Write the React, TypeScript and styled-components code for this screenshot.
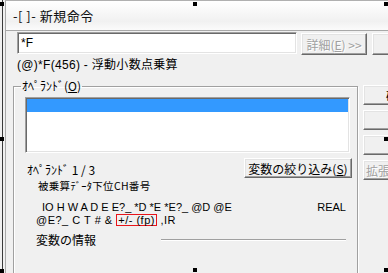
import React from 'react'
import styled, { createGlobalStyle } from 'styled-components'

const GlobalStyle = createGlobalStyle`
  html, body {
    margin: 0;
    padding: 0;
    background: #f0f0f0;
    overflow: hidden;
  }
  body {
    font-family: "Liberation Sans", "Noto Sans CJK JP", sans-serif;
    font-size: 12px;
    color: #000;
  }
`

const Stage = styled.div`
  position: relative;
  width: 388px;
  height: 273px;
  overflow: hidden;
  padding-left: 5px;
  box-sizing: border-box;
`

const Window = styled.div`
  width: 440px;
  height: 300px;
  border-left: 1px solid #a9a9a9;
  border-top: 1px solid #b0b0b0;
  background: #f0f0f0;
  display: flex;
  flex-direction: column;
`

const TitleBar = styled.div`
  height: 29px;
  flex-shrink: 0;
  border-bottom: 1px solid #a8a8a8;
  background: linear-gradient(180deg, #ffffff 0%, #f6f6f6 45%, #f1f1f1 70%, #fbfbfb 100%);
  display: flex;
  align-items: center;
  padding-left: 7px;
  font-family: "Noto Sans CJK JP", sans-serif;
  font-size: 13px;
  letter-spacing: 0.5px;
  white-space: pre;
  color: #111;
`

const TopRow = styled.div`
  display: flex;
  align-items: flex-start;
  margin-top: 1px;
  padding-left: 11px;
`

const TextInput = styled.div`
  width: 280px;
  height: 22px;
  box-sizing: border-box;
  background: #fff;
  border: 1px solid;
  border-color: #a0a0a0 #ffffff #ffffff #a0a0a0;
  box-shadow: inset 1px 1px 0 #696969, inset -1px -1px 0 #e3e3e3;
  padding: 2px 3px 0;
  line-height: 16px;
  font-size: 12px;
`

const Button = styled.div<{ $w: number; $h?: number; $disabled?: boolean; $align?: string }>`
  width: ${p => p.$w}px;
  height: ${p => p.$h ?? 22}px;
  flex-shrink: 0;
  box-sizing: border-box;
  background: #f0f0f0;
  border: 1px solid;
  border-color: #ffffff #696969 #696969 #ffffff;
  box-shadow: inset -1px -1px 0 #a0a0a0, inset 1px 1px 0 #e3e3e3;
  display: flex;
  align-items: center;
  justify-content: ${p => p.$align ?? 'center'};
  padding: ${p => (p.$align === 'flex-start' ? '0 0 0 2px' : '0')};
  white-space: nowrap;
  overflow: hidden;
  font-family: "Noto Sans CJK JP", sans-serif;
  font-size: 12px;
  color: ${p => (p.$disabled ? '#a0a0a0' : '#000')};
  text-shadow: ${p => (p.$disabled ? '1px 1px 0 #fff' : 'none')};
`

const U = styled.span`
  text-decoration: underline;
`

const Desc = styled.div`
  margin-top: 3px;
  padding-left: 11px;
  line-height: 14px;
  font-size: 12px;
  letter-spacing: 0.3px;
  white-space: nowrap;
`

const Main = styled.div`
  display: flex;
  align-items: flex-start;
  padding-left: 7px;
  margin-top: 7px;
`

const Group = styled.fieldset`
  margin: 0;
  width: 345px;
  height: 220px;
  box-sizing: border-box;
  min-width: 0;
  border: 1px solid #a0a0a0;
  box-shadow: inset 1px 1px 0 #fff, 1px 1px 0 #fff;
  padding: 4px 7px 0 7px;
`

const Legend = styled.legend`
  padding: 0 1px;
  line-height: 14px;
  font-family: "Noto Sans CJK JP", sans-serif;
  font-size: 12px;
`

const Inner = styled.div`
  padding-left: 4px;
  display: flex;
  flex-direction: column;
`

const ListBox = styled.div`
  height: 56px;
  box-sizing: border-box;
  background: #fff;
  border: 1px solid;
  border-color: #a0a0a0 #ffffff #ffffff #a0a0a0;
  box-shadow: inset 1px 1px 0 #696969, inset -1px -1px 0 #e3e3e3;
  padding: 1px;
`

const ListItem = styled.div<{ $selected?: boolean }>`
  height: 13px;
  background: ${p => (p.$selected ? '#3399ff' : 'transparent')};
`

const OperandRow = styled.div`
  margin-top: 5px;
  margin-right: -2px;
  height: 20px;
  display: flex;
  align-items: center;
  justify-content: space-between;
`

const OperandLabel = styled.span`
  padding-left: 2px;
  padding-top: 3px;
  font-family: "Noto Sans CJK JP", sans-serif;
  font-size: 12px;
`

const HintLabel = styled.div`
  margin-top: 2px;
  padding-left: 13px;
  line-height: 12px;
  font-family: "Noto Sans CJK JP", sans-serif;
  font-size: 10.5px;
  letter-spacing: 0.3px;
  white-space: nowrap;
`

const CodeLine = styled.div<{ $indent: number; $top?: number; $spacing?: number }>`
  margin-top: ${p => p.$top ?? 0}px;
  padding-left: ${p => p.$indent}px;
  display: flex;
  justify-content: space-between;
  line-height: 13px;
  font-family: "Liberation Sans", sans-serif;
  font-size: 11px;
  letter-spacing: ${p => p.$spacing ?? 0}px;
  white-space: pre;
`

const TypeLabel = styled.span`
  margin-right: 4px;
`

const RedBox = styled.span`
  display: inline-block;
  line-height: 10px;
  border: 1px solid #e8141b;
  padding: 0 1px;
`

const InfoRow = styled.div`
  margin-top: 6px;
  height: 14px;
  display: flex;
  align-items: center;
  padding-left: 11px;
`

const InfoLabel = styled.span`
  font-family: "Noto Sans CJK JP", sans-serif;
  font-size: 12px;
  line-height: 14px;
`

const Rule = styled.div`
  flex: 1;
  margin-left: 65px;
  margin-right: 4px;
  height: 1px;
  background: #a0a0a0;
  border-bottom: 1px solid #fff;
`

const SideColumn = styled.div`
  margin-left: 5px;
  margin-top: 6px;
  display: flex;
  flex-direction: column;
  gap: 5px;
`

const SelectionEdge = styled.div`
  position: absolute;
  left: 2px;
  top: 0;
  bottom: 0;
  width: 1px;
  background: #3a3a3a;
`

const Handle = styled.div<{ $x: number; $y: number }>`
  position: absolute;
  left: ${p => p.$x}px;
  top: ${p => p.$y}px;
  width: 4px;
  height: 4px;
  background: #000;
`

const handles = [
  [0, 2], [193, 2], [384, 2],
  [0, 137], [384, 137],
  [0, 269], [193, 268], [384, 268],
]

const App = () => {
  return (
    <Stage>
      <GlobalStyle />
      <Window>
        <TitleBar>-[ ]- 新規命令</TitleBar>
        <TopRow>
          <TextInput>*F</TextInput>
          <Button $w={66} $disabled style={{ marginLeft: 4, marginTop: 1 }}>
            詳細(<U>E</U>) &gt;&gt;
          </Button>
          <Button $w={60} style={{ marginLeft: 5, marginTop: 1 }} />
        </TopRow>
        <Desc>(@)*F(456) - 浮動小数点乗算</Desc>
        <Main>
          <Group>
            <Legend>ｵﾍﾟﾗﾝﾄﾞ(<U>O</U>)</Legend>
            <Inner>
              <ListBox>
                <ListItem $selected />
              </ListBox>
              <OperandRow>
                <OperandLabel>ｵﾍﾟﾗﾝﾄﾞ 1 / 3</OperandLabel>
                <Button $w={108} $h={20}>
                  変数の絞り込み(<U>S</U>)
                </Button>
              </OperandRow>
              <HintLabel>被乗算ﾃﾞｰﾀ下位CH番号</HintLabel>
              <CodeLine $indent={17} $top={9}>
                <span>IO H W A D E E?_ *D *E *E?_ @D @E</span>
                <TypeLabel>REAL</TypeLabel>
              </CodeLine>
              <CodeLine $indent={11} $spacing={0.5}>
                <span>
                  @E?_ C T # &amp; <RedBox>+/- (fp)</RedBox> ,IR
                </span>
              </CodeLine>
              <InfoRow>
                <InfoLabel>変数の情報</InfoLabel>
                <Rule />
              </InfoRow>
            </Inner>
          </Group>
          <SideColumn>
            <Button $w={70} $h={20}>確定</Button>
            <Button $w={70} $h={20} />
            <Button $w={70} $h={20} />
            <Button $w={70} $h={20} $disabled $align="flex-start">拡張設定...</Button>
          </SideColumn>
        </Main>
      </Window>
      <SelectionEdge />
      {handles.map(([x, y], i) => (
        <Handle key={i} $x={x} $y={y} />
      ))}
    </Stage>
  )
}

export default App
